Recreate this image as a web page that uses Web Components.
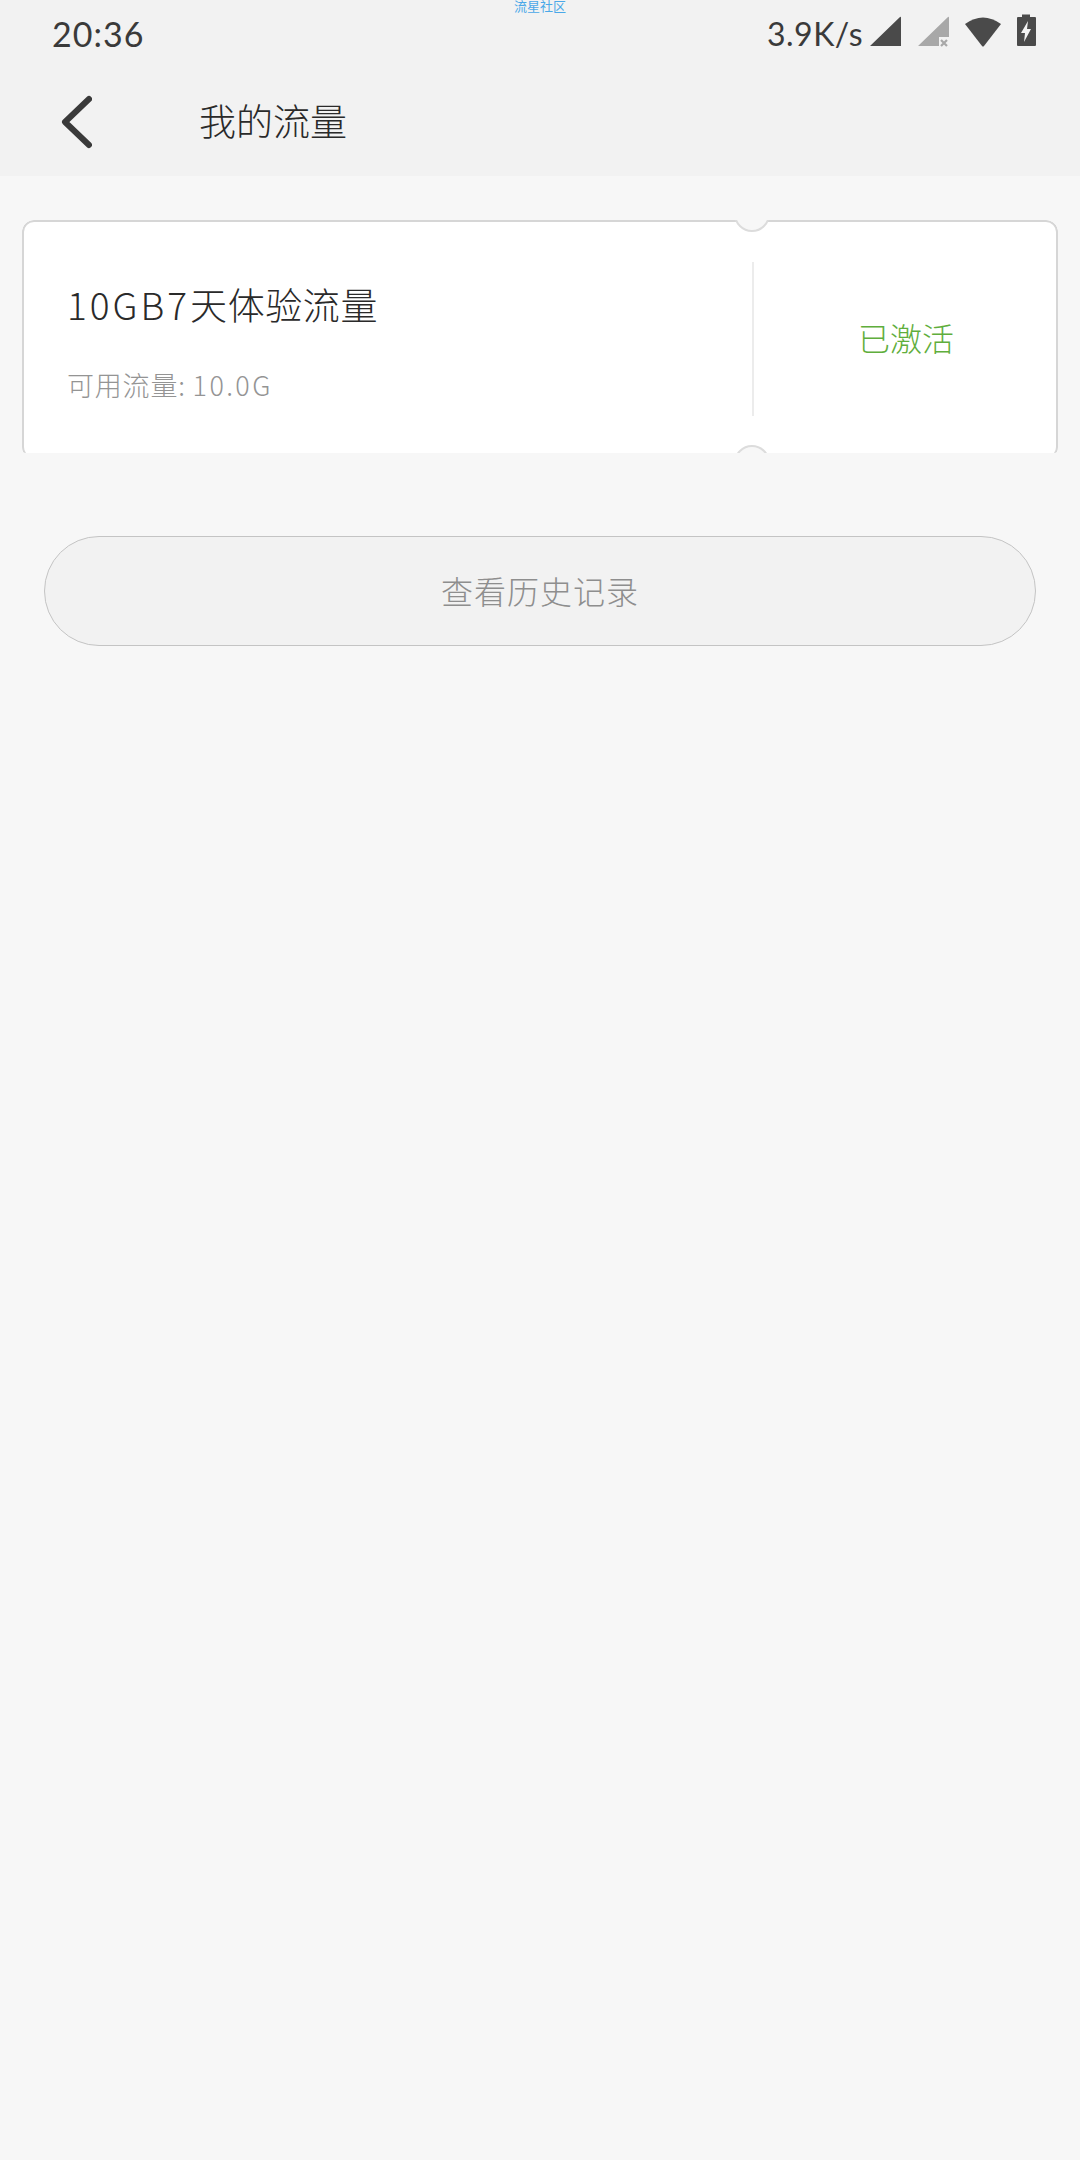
<!DOCTYPE html>
<html lang="zh">
<head>
<meta charset="utf-8">
<title>我的流量</title>
<style>
  html, body { margin: 0; padding: 0; }
  body {
    width: 1080px;
    min-height: 2160px;
    background: #f7f7f7;
    font-family: "Noto Sans CJK SC", "Noto Sans", sans-serif;
  }
</style>
</head>
<body>
<status-bar></status-bar>
<nav-header>我的流量</nav-header>
<traffic-card state="已激活">
  <span slot="name"><span class="latin" style="letter-spacing:3px">10GB7</span>天体验流量</span>
  <span slot="remaining">可用流量: <span class="latin" style="letter-spacing:2.4px">10.0G</span></span>
</traffic-card>
<history-button>查看历史记录</history-button>

<script>
class StatusBar extends HTMLElement {
  constructor() {
    super();
    this.attachShadow({ mode: "open" });
  }

  connectedCallback() {
    this.shadowRoot.innerHTML = `
      <style>
        :host {
          display: flex;
          position: relative;
          height: 68px;
          box-sizing: border-box;
          padding: 14px 42px 0 52px;
          background: #f2f2f2;
          color: #3a3a3a;
          font-family: Lato, "Noto Sans", sans-serif;
          justify-content: space-between;
          align-items: flex-start;
        }
        .time { font-size: 34px; line-height: 40px; letter-spacing: 1px; }
        .right { display: flex; align-items: flex-start; }
        .speed { font-size: 32px; line-height: 40px; letter-spacing: 0.5px; margin-right: 7px; }
        svg { display: block; }
        .watermark {
          position: absolute;
          top: -2px;
          left: 514px;
          font: 13px/16px "Noto Sans CJK SC", sans-serif;
          color: #4aa8e8;
        }
      </style>
      <span class="time">20:36</span>
      <span class="watermark">流星社区</span>
      <div class="right">
        <span class="speed">3.9K/s</span>
        <svg width="168" height="34" viewBox="0 0 168 34">
          <path d="M0 32 L30 3 Q31 2 31 4 V32 Z" fill="#4a4a4a"/>
          <path d="M48 32 L78 3 Q79 2 79 4 V23 H69 V32 Z" fill="#a8a8a8"/>
          <path d="M71 26 L77 32 M77 26 L71 32" stroke="#a8a8a8" stroke-width="2.2" fill="none"/>
          <path d="M95 10 Q113 -3 131 10 L114 32 Q113 33 112 32 Z" fill="#4a4a4a"/>
          <path d="M147 4 Q147 3 148 3 H152 V0.5 H160 V3 H165 Q166 3 166 4 V31 Q166 32 165 32 H148 Q147 32 147 31 Z" fill="#4a4a4a"/>
          <path d="M158 7 L151 19 H155 L154 28 L161 15 H157 Z" fill="#f2f2f2"/>
        </svg>
      </div>
    `;
  }
}

class NavHeader extends HTMLElement {
  constructor() {
    super();
    this.attachShadow({ mode: "open" });
  }

  connectedCallback() {
    this.shadowRoot.innerHTML = `
      <style>
        :host {
          display: flex;
          align-items: center;
          height: 108px;
          box-sizing: border-box;
          padding-left: 60px;
          background: #f2f2f2;
          color: #2a2a2a;
        }
        svg { display: block; width: 32px; height: 56px; margin-right: 107px; }
        .title { font-size: 37px; line-height: 48px; font-weight: 300; margin-bottom: 5px; }
      </style>
      <svg viewBox="0 0 32 56">
        <path d="M29 5 L5 28 L29 51" fill="none" stroke="#3a3a3a" stroke-width="6" stroke-linecap="round" stroke-linejoin="round"/>
      </svg>
      <span class="title"><slot></slot></span>
    `;
  }
}

class TrafficCard extends HTMLElement {
  constructor() {
    super();
    this.attachShadow({ mode: "open" });
  }

  connectedCallback() {
    this.shadowRoot.innerHTML = `
      <style>
        :host {
          display: block;
          margin: 44px 22px 0;
        }
        .card {
          position: relative;
          display: flex;
          height: 233px;
          overflow: hidden;
          background: #fff;
          border-radius: 12px 12px 4px 4px;
        }
        .frame {
          position: absolute;
          inset: 0 0 -6px 0;
          border: 2px solid #d6d6d6;
          border-radius: 12px;
        }
        .info {
          width: 730px;
          box-sizing: border-box;
          padding: 60px 0 0 45px;
        }
        .name {
          font-size: 37px;
          line-height: 48px;
          font-weight: 300;
          color: #2a2a2a;
          letter-spacing: 0.6px;
        }
        .remaining {
          margin-top: 39px;
          font-size: 27px;
          line-height: 36px;
          font-weight: 300;
          color: #949494;
          letter-spacing: 0.8px;
        }
        .state {
          flex: 1;
          display: flex;
          align-items: center;
          justify-content: center;
          font-size: 32px;
          font-weight: 300;
          color: #5fae3c;
        }
        .rule {
          width: 2px;
          height: 154px;
          margin-top: 42px;
          background: #ececec;
        }
        .notch {
          position: absolute;
          left: 712px;
          width: 32px;
          height: 32px;
          border: 2px solid #dcdcdc;
          border-radius: 50%;
          background: #f7f7f7;
        }
        .top { top: -24px; }
        .bottom { bottom: -28px; }
      </style>
      <div class="card">
        <div class="frame"></div>
        <div class="info">
          <div class="name"><slot name="name"></slot></div>
          <div class="remaining"><slot name="remaining"></slot></div>
        </div>
        <div class="rule"></div>
        <div class="state">${this.getAttribute("state")}</div>
        <span class="notch top"></span>
        <span class="notch bottom"></span>
      </div>
    `;
  }
}

class HistoryButton extends HTMLElement {
  constructor() {
    super();
    this.attachShadow({ mode: "open" });
  }

  connectedCallback() {
    this.shadowRoot.innerHTML = `
      <style>
        :host {
          display: flex;
          align-items: center;
          justify-content: center;
          height: 110px;
          box-sizing: border-box;
          margin: 83px 44px 0;
          padding-bottom: 3px;
          background: #f2f2f2;
          border: 1.5px solid #c4c4c4;
          border-radius: 55px;
          color: #8e8e8e;
          font-size: 32px;
          font-weight: 300;
          letter-spacing: 1px;
        }
      </style>
      <slot></slot>
    `;
  }
}

customElements.define("status-bar", StatusBar);
customElements.define("nav-header", NavHeader);
customElements.define("traffic-card", TrafficCard);
customElements.define("history-button", HistoryButton);
</script>
</body>
</html>
